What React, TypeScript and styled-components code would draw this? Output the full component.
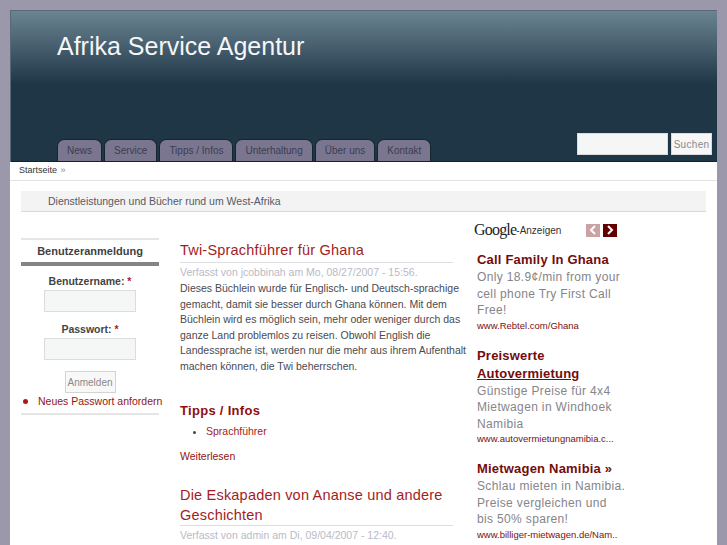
import React from 'react';
import styled, { createGlobalStyle } from 'styled-components';

const GlobalStyle = createGlobalStyle`
  html, body {
    margin: 0;
    height: 545px;
    overflow: hidden;
    background: #9a98aa;
    font-family: "Liberation Sans", Arial, sans-serif;
  }
`;

const tabs = ['News', 'Service', 'Tipps / Infos', 'Unterhaltung', 'Über uns', 'Kontakt'];

const ads = [
  {
    title: 'Call Family In Ghana',
    lines: ['Only 18.9¢/min from your', 'cell phone Try First Call', 'Free!'],
    url: 'www.Rebtel.com/Ghana',
  },
  {
    title: 'Preiswerte',
    link: 'Autovermietung',
    lines: ['Günstige Preise für 4x4', 'Mietwagen in Windhoek', 'Namibia'],
    url: 'www.autovermietungnamibia.c...',
  },
  {
    title: 'Mietwagen Namibia »',
    lines: ['Schlau mieten in Namibia.', 'Preise vergleichen und', 'bis 50% sparen!'],
    url: 'www.billiger-mietwagen.de/Nam..',
  },
];

function App() {
  return (
    <Page>
      <GlobalStyle />
      <Header>
        <SiteName>Afrika Service Agentur</SiteName>
        <NavRow>
          <Tabs>
            {tabs.map((tab) => (
              <Tab key={tab}>{tab}</Tab>
            ))}
          </Tabs>
          <SearchForm>
            <SearchInput />
            <SearchButton>Suchen</SearchButton>
          </SearchForm>
        </NavRow>
      </Header>
      <Breadcrumb>
        Startseite <BreadcrumbSep>»</BreadcrumbSep>
      </Breadcrumb>
      <Slogan>Dienstleistungen und Bücher rund um West-Afrika</Slogan>
      <Columns>
        <Sidebar>
          <BlockTitle>Benutzeranmeldung</BlockTitle>
          <FieldLabel>
            Benutzername: <Required>*</Required>
          </FieldLabel>
          <TextField />
          <FieldLabel>
            Passwort: <Required>*</Required>
          </FieldLabel>
          <TextField />
          <LoginButton>Anmelden</LoginButton>
          <PasswordLink>Neues Passwort anfordern</PasswordLink>
        </Sidebar>
        <Main>
          <PostTitle>Twi-Sprachführer für Ghana</PostTitle>
          <Meta>Verfasst von jcobbinah am Mo, 08/27/2007 - 15:56.</Meta>
          <PostBody>
            Dieses Büchlein wurde für Englisch- und Deutsch-sprachige
            <br />
            gemacht, damit sie besser durch Ghana können. Mit dem
            <br />
            Büchlein wird es möglich sein, mehr oder weniger durch das
            <br />
            ganze Land problemlos zu reisen. Obwohl English die
            <br />
            Landessprache ist, werden nur die mehr aus ihrem Aufenthalt
            <br />
            machen können, die Twi beherrschen.
          </PostBody>
          <SectionTitle>Tipps / Infos</SectionTitle>
          <BulletList>
            <BulletItem>Sprachführer</BulletItem>
          </BulletList>
          <ReadMore>Weiterlesen</ReadMore>
          <SecondTitle>Die Eskapaden von Ananse und andere Geschichten</SecondTitle>
          <Meta>Verfasst von admin am Di, 09/04/2007 - 12:40.</Meta>
        </Main>
        <AdColumn>
          <AdHeader>
            <GoogleWord>Google</GoogleWord>
            <AdLabel>-Anzeigen</AdLabel>
            <AdArrows>
              <AdArrow $active={false}>
                <svg width="8" height="10" viewBox="0 0 8 10">
                  <path d="M6 1 L2 5 L6 9" fill="none" stroke="#fff" strokeWidth="2" />
                </svg>
              </AdArrow>
              <AdArrow $active>
                <svg width="8" height="10" viewBox="0 0 8 10">
                  <path d="M2 1 L6 5 L2 9" fill="none" stroke="#fff" strokeWidth="2" />
                </svg>
              </AdArrow>
            </AdArrows>
          </AdHeader>
          {ads.map((ad) => (
            <Ad key={ad.url}>
              <AdTitle>{ad.title}</AdTitle>
              {ad.link && <AdTitleLink>{ad.link}</AdTitleLink>}
              {ad.lines.map((line) => (
                <AdLine key={line}>{line}</AdLine>
              ))}
              <AdUrl>{ad.url}</AdUrl>
            </Ad>
          ))}
        </AdColumn>
      </Columns>
    </Page>
  );
}

const Page = styled.div`
  margin: 10px 10px 0;
  background: #fff;
  height: 535px;
  overflow: hidden;
`;

const Header = styled.header`
  box-sizing: border-box;
  height: 152px;
  border-top: 1px solid #5d6674;
  border-left: 1px solid #5d6674;
  background: linear-gradient(#6b8492 0, #1f3646 73px);
  background-color: #1e3545;
  display: flex;
  flex-direction: column;
  justify-content: space-between;
`;

const SiteName = styled.h1`
  margin: 19px 0 0 46px;
  font-size: 25px;
  line-height: 32px;
  font-weight: normal;
  color: #f4f6f7;
`;

const NavRow = styled.div`
  display: flex;
  justify-content: space-between;
  align-items: flex-end;
  padding: 0 5px 0 46px;
  border-bottom: 1px solid #14222c;
`;

const Tabs = styled.nav`
  display: flex;
  gap: 2px;
`;

const Tab = styled.a`
  box-sizing: border-box;
  height: 22px;
  padding: 0 9px;
  display: flex;
  align-items: center;
  background: #7a7690;
  border: 1px solid #16242e;
  border-bottom: 0;
  border-radius: 7px 7px 0 0;
  color: #3a3d50;
  font-size: 10px;
`;

const SearchForm = styled.form`
  display: flex;
  gap: 3px;
  margin-bottom: 6px;
`;

const SearchInput = styled.div`
  box-sizing: border-box;
  width: 91px;
  height: 22px;
  background: #f5f7f6;
  border: 1px solid #dcdcdc;
`;

const SearchButton = styled.div`
  box-sizing: border-box;
  width: 41px;
  height: 22px;
  display: flex;
  align-items: center;
  justify-content: center;
  background: #f7f7f7;
  border: 1px solid #dcdcdc;
  color: #8a8a8a;
  font-size: 10px;
  letter-spacing: 0.3px;
`;

const Breadcrumb = styled.div`
  box-sizing: border-box;
  height: 19px;
  padding: 1px 0 0 9px;
  border-bottom: 1px solid #e3e3e3;
  font-size: 9px;
  line-height: 14px;
  color: #333;
`;

const BreadcrumbSep = styled.span`
  color: #888;
  margin-left: 1px;
`;

const Slogan = styled.div`
  box-sizing: border-box;
  height: 21px;
  margin: 10px 11px 0;
  padding-left: 27px;
  background: #f3f3f3;
  border-bottom: 1px solid #d8d8d8;
  font-size: 10.5px;
  line-height: 21px;
  color: #555a66;
`;

const Columns = styled.div`
  display: flex;
  align-items: flex-start;
  padding-left: 11px;
`;

const Sidebar = styled.aside`
  box-sizing: border-box;
  width: 138px;
  margin-top: 26px;
  padding-bottom: 5px;
  display: flex;
  flex-direction: column;
  align-items: center;
  border-top: 2px solid #e5e5e5;
  border-bottom: 2px solid #e5e5e5;
`;

const BlockTitle = styled.h2`
  box-sizing: border-box;
  width: 100%;
  height: 26px;
  margin: 0 0 8px;
  border-bottom: 4px solid #858585;
  font-size: 11px;
  line-height: 22px;
  text-align: center;
  color: #3f3f3f;
`;

const FieldLabel = styled.label`
  font-size: 10.5px;
  line-height: 14px;
  font-weight: bold;
  color: #444;
  margin-bottom: 2px;
`;

const Required = styled.span`
  color: #b01818;
`;

const TextField = styled.div`
  box-sizing: border-box;
  width: 92px;
  height: 22px;
  margin-bottom: 10px;
  background: #f5f7f6;
  border: 1px solid #dcdcdc;
`;

const LoginButton = styled.div`
  box-sizing: border-box;
  width: 51px;
  height: 22px;
  margin-top: 1px;
  display: flex;
  align-items: center;
  justify-content: center;
  background: #f8f8f8;
  border: 1px solid #d4d4d4;
  color: #888;
  font-size: 10px;
`;

const PasswordLink = styled.div`
  align-self: stretch;
  position: relative;
  margin-top: 1px;
  padding-left: 17px;
  font-size: 10.5px;
  line-height: 14px;
  white-space: nowrap;
  color: #8f1616;

  &::before {
    content: '';
    position: absolute;
    left: 2px;
    top: 5px;
    width: 5px;
    height: 5px;
    border-radius: 50%;
    background: #b01818;
  }
`;

const Main = styled.main`
  box-sizing: border-box;
  width: 273px;
  margin: 29px 0 0 21px;
`;

const PostTitle = styled.h2`
  margin: 0;
  padding-bottom: 2px;
  border-bottom: 1.5px solid #dedee2;
  font-size: 14.5px;
  line-height: 19px;
  font-weight: normal;
  letter-spacing: 0.2px;
  color: #a31d1d;
`;

const SecondTitle = styled(PostTitle)`
  margin-top: 22px;
  line-height: 20px;
  padding-bottom: 0;
`;

const Meta = styled.div`
  margin-top: 2px;
  font-size: 10.5px;
  line-height: 14px;
  color: #b9bac6;
`;

const PostBody = styled.p`
  margin: 2px 0 0;
  font-size: 10.5px;
  line-height: 15.5px;
  white-space: nowrap;
  color: #4a4a50;
`;

const SectionTitle = styled.h3`
  margin: 29px 0 0;
  font-size: 13px;
  line-height: 16px;
  letter-spacing: 0.3px;
  color: #8f0f0f;
`;

const BulletList = styled.ul`
  margin: 5px 0 0;
  padding: 0 0 0 26px;
  list-style: disc;
  color: #444;
`;

const BulletItem = styled.li`
  font-size: 10.5px;
  line-height: 14px;
  color: #a31d1d;

  &::marker {
    color: #444;
  }
`;

const ReadMore = styled.a`
  display: block;
  margin-top: 11px;
  font-size: 10.5px;
  line-height: 14px;
  color: #8f1616;
`;

const AdColumn = styled.aside`
  width: 150px;
  margin: 9px 0 0 21px;
`;

const AdHeader = styled.div`
  display: flex;
  align-items: center;
  height: 18px;
  margin-bottom: 12px;
`;

const GoogleWord = styled.span`
  font-family: "Liberation Serif", serif;
  font-size: 16px;
  letter-spacing: -0.8px;
  color: #222;
`;

const AdLabel = styled.span`
  font-size: 10px;
  color: #333;
`;

const AdArrows = styled.div`
  display: flex;
  gap: 3px;
  margin-left: 25px;
`;

const AdArrow = styled.span<{ $active: boolean }>`
  width: 14px;
  height: 13px;
  display: flex;
  align-items: center;
  justify-content: center;
  background: ${(props) => (props.$active ? '#650000' : '#c9a3a3')};
`;

const Ad = styled.div`
  margin: 0 0 15px 3px;
`;

const AdTitle = styled.div`
  font-size: 13px;
  line-height: 18px;
  font-weight: bold;
  letter-spacing: 0.2px;
  white-space: nowrap;
  color: #730c0c;
`;

const AdTitleLink = styled(AdTitle)`
  text-decoration: underline;
`;

const AdLine = styled.div`
  font-size: 12px;
  line-height: 16.5px;
  letter-spacing: 0.35px;
  white-space: nowrap;
  color: #85858a;
`;

const AdUrl = styled.div`
  font-size: 9.5px;
  line-height: 13px;
  white-space: nowrap;
  color: #7a1010;
`;

export default App;
